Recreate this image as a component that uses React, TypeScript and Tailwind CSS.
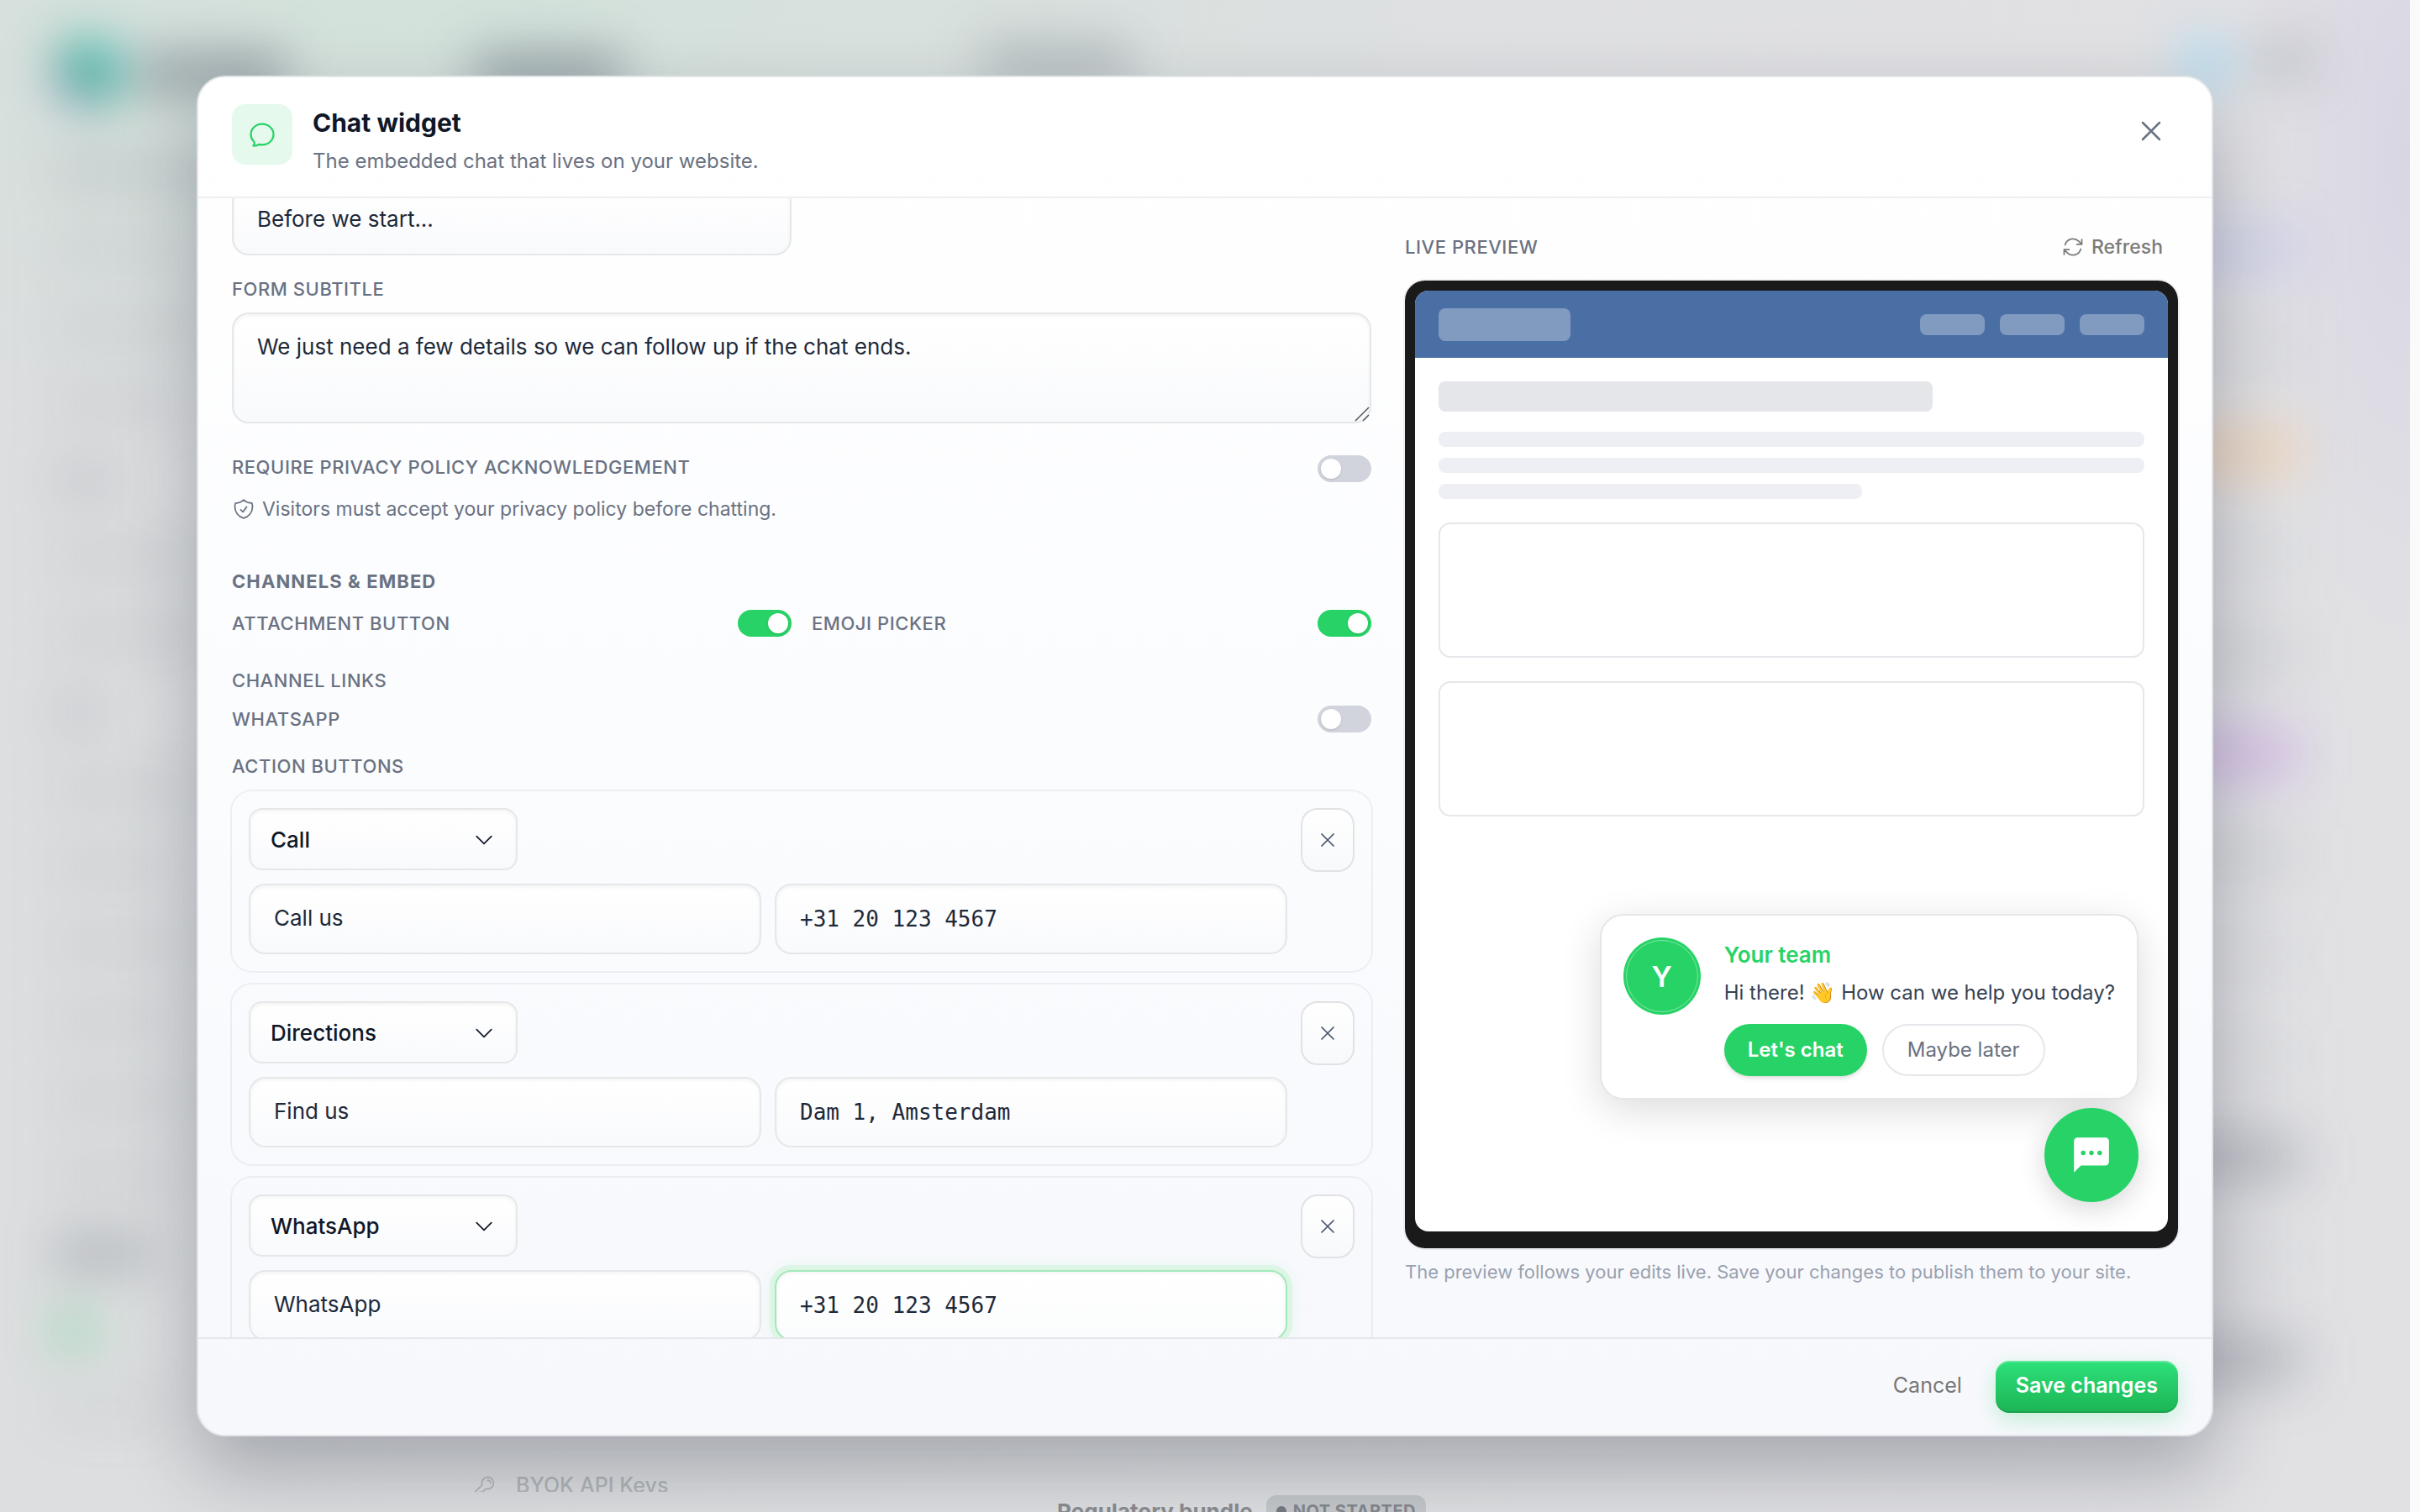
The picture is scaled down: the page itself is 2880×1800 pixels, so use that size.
import type { ReactNode } from "react";
import {
    HiOutlineArrowPath,
    HiOutlineChatBubbleOvalLeft,
    HiOutlineChevronDown,
    HiOutlineKey,
    HiOutlineShieldCheck,
    HiOutlineXMark,
} from "react-icons/hi2";

const actions = [
    { type: "Call", label: "Call us", value: "+31 20 123 4567", active: false },
    { type: "Directions", label: "Find us", value: "Dam 1, Amsterdam", active: false },
    { type: "WhatsApp", label: "WhatsApp", value: "+31 20 123 4567", active: true },
];

const sideRows = [
    "w-48 bg-gray-500/25", "w-40 bg-gray-500/15", "w-44 bg-gray-500/15", "w-36 bg-gray-500/15",
    "w-20 bg-gray-500/25", "w-40 bg-gray-500/15", "w-44 bg-gray-500/15", "w-16 bg-gray-500/25",
    "w-40 bg-gray-500/15", "w-36 bg-gray-500/15", "w-40 bg-gray-500/15", "w-36 bg-gray-500/15",
    "w-40 bg-gray-500/15", "w-36 bg-gray-500/15", "w-28 bg-gray-600/40", "w-12 bg-green-500/40",
    "w-32 bg-gray-500/10",
];

const rightRows = [
    "bg-indigo-400/15", "bg-gray-500/5", "bg-orange-300/30", "bg-gray-500/5",
    "bg-gray-500/10", "bg-purple-700/15", "bg-gray-500/10", "bg-gray-500/5",
    "bg-gray-500/5", "bg-gray-600/25", "bg-gray-500/5", "bg-gray-600/25",
];

const field =
    "block w-full border-2 border-[#e6e7e9] bg-linear-to-b from-white to-[#f9fafc] text-[26px] text-gray-800 shadow-[inset_0_2px_4px_rgba(0,0,0,0.05)] outline-none";

function Label({ htmlFor, children }: { htmlFor?: string; children: ReactNode }) {
    return (
        <label htmlFor={htmlFor} className="block text-[22px] leading-7 font-medium tracking-wide text-gray-500">
            {children}
        </label>
    );
}

function Toggle({ id, on }: { id: string; on?: boolean }) {
    return (
        <input
            id={id}
            type="checkbox"
            role="switch"
            defaultChecked={on}
            className="h-8 w-16 shrink-0 appearance-none rounded-full bg-[#d1d4dc] p-1 before:block before:size-6 before:rounded-full before:bg-white before:shadow-sm before:content-[''] checked:bg-[#27d366] checked:before:ml-8"
        />
    );
}

function ActionCard({ item, index }: { item: (typeof actions)[number]; index: number }) {
    return (
        <div className="flex items-start gap-4 rounded-3xl p-5 ring-2 ring-black/5">
            <div className="flex-1">
                <div className="relative w-80">
                    <select
                        aria-label={`Action ${index + 1} type`}
                        defaultValue={item.type}
                        className={`${field} h-[74px] appearance-none rounded-2xl px-6 font-medium text-gray-900`}
                    >
                        {actions.map((a) => (
                            <option key={a.type}>{a.type}</option>
                        ))}
                    </select>
                    <HiOutlineChevronDown className="pointer-events-none absolute top-6 right-[26px] size-7 text-gray-900" />
                </div>
                <div className="mt-4 grid grid-cols-2 gap-4">
                    <input
                        aria-label={`Action ${index + 1} label`}
                        defaultValue={item.label}
                        className={`${field} h-[84px] rounded-[20px] px-7 pb-1`}
                    />
                    <input
                        aria-label={`Action ${index + 1} value`}
                        defaultValue={item.value}
                        className={
                            item.active
                                ? "block h-[84px] w-full rounded-[20px] border-2 border-[#a0e9b9] bg-linear-to-b from-white to-[#fbfcfd] px-7 font-['DejaVu_Sans_Mono',monospace] text-[26px] text-gray-800 shadow-[0_0_0_6px_#dcf5e5,0_0_24px_rgba(37,211,102,0.12),inset_0_2px_4px_rgba(0,0,0,0.05)] outline-none"
                                : `${field} h-[84px] rounded-[20px] px-7 font-['DejaVu_Sans_Mono',monospace]`
                        }
                    />
                </div>
            </div>
            <button
                aria-label={`Remove ${item.type}`}
                className="flex h-[76px] w-16 items-center justify-center rounded-[20px] border-2 border-[#e1e2e4] bg-linear-to-b from-white to-[#f8f9fb] text-slate-600"
            >
                <HiOutlineXMark className="size-7" />
            </button>
        </div>
    );
}

function Preview() {
    return (
        <div className="relative h-[1152px] rounded-3xl bg-[#1a1a1a] px-3 pt-3 pb-5 ring-2 ring-black/5">
            <div className="relative h-full overflow-hidden rounded-2xl bg-white">
                <div className="flex h-20 items-center justify-between bg-[#4a6fa5] px-7">
                    <div className="h-[39px] w-[157px] rounded-lg bg-white/30" />
                    <div className="flex gap-[18px]">
                        <div className="h-[25px] w-[77px] rounded-lg bg-white/30" />
                        <div className="h-[25px] w-[77px] rounded-lg bg-white/30" />
                        <div className="h-[25px] w-[77px] rounded-lg bg-white/30" />
                    </div>
                </div>
                <div className="flex flex-col px-7 pt-7">
                    <div className="h-9 w-7/10 rounded-lg bg-[#e4e6ea]" />
                    <div className="mt-6 flex flex-col gap-[13px]">
                        <div className="h-[18px] w-full rounded-lg bg-[#eeeff4]" />
                        <div className="h-[18px] w-full rounded-lg bg-[#eeeff4]" />
                        <div className="h-[18px] w-3/5 rounded-lg bg-[#eeeff4]" />
                    </div>
                    <div className="mt-7 h-[161px] rounded-[14px] border-2 border-gray-200" />
                    <div className="mt-7 h-[161px] rounded-[14px] border-2 border-gray-200" />
                </div>

                {/* Chat teaser and launcher */}
                <div className="absolute right-[35px] bottom-[35px] flex flex-col items-end gap-[10px]">
                    <div className="flex gap-7 rounded-[28px] border-2 border-[#e6e6e8] bg-white p-[26px] shadow-[0_12px_48px_rgba(0,0,0,0.14)]">
                        <div className="flex size-[92px] shrink-0 items-center justify-center rounded-full bg-[#27d366] p-[3px]">
                            <div className="flex size-full items-center justify-center rounded-full border border-white/40 text-[34px] font-semibold text-white">
                                Y
                            </div>
                        </div>
                        <div>
                            <p className="text-[26px] leading-[42px] font-semibold text-[#27d366]">Your team</p>
                            <p className="mt-[3px] text-2xl leading-[42px] text-gray-700">
                                Hi there! 👋 How can we help you today?
                            </p>
                            <div className="mt-4 flex gap-[18px]">
                                <button className="h-[62px] rounded-full bg-[#27d366] px-7 text-2xl font-semibold text-white shadow-md">
                                    Let's chat
                                </button>
                                <button className="h-[62px] rounded-full border-2 border-gray-200 px-7 text-2xl text-gray-500">
                                    Maybe later
                                </button>
                            </div>
                        </div>
                    </div>
                    <button
                        aria-label="Open chat"
                        className="flex size-28 items-center justify-center rounded-full bg-[#27d366] shadow-[0_8px_32px_rgba(0,0,0,0.16)]"
                    >
                        <svg viewBox="0 0 24 24" className="size-[50px]">
                            <path fill="#fff" d="M20 2H4a2 2 0 0 0-2 2v18l4-4h14a2 2 0 0 0 2-2V4a2 2 0 0 0-2-2z" />
                            <circle cx="7.3" cy="10.8" r="1.3" fill="#27d366" />
                            <circle cx="12" cy="10.8" r="1.3" fill="#27d366" />
                            <circle cx="16.7" cy="10.8" r="1.3" fill="#27d366" />
                        </svg>
                    </button>
                </div>
            </div>
        </div>
    );
}

/* Settings page behind the dialog */
function Backdrop() {
    return (
        <div aria-hidden="true" className="absolute inset-0 overflow-hidden bg-linear-to-r from-[#dcdedf] to-[#e1e1e4]">
            <div className="absolute inset-0 bg-[radial-gradient(ellipse_1300px_500px_at_18%_0%,#d3e2db,transparent)]" />
            <div className="absolute inset-0 bg-[radial-gradient(ellipse_200px_600px_at_100%_10%,#d9d6e4,transparent)]" />
            <div className="absolute inset-0 flex justify-between px-16 pt-12 blur-[30px]">
                <div className="flex flex-col gap-[60px]">
                    <div className="flex items-center gap-5">
                        <div className="size-20 rounded-full bg-linear-to-bl from-sky-400/70 via-emerald-600/80 to-purple-500/70" />
                        <div className="h-12 w-44 bg-gray-600/50" />
                        <div className="ml-[204px] h-12 w-44 bg-gray-600/50" />
                        <div className="mb-6 ml-[410px] h-12 w-44 bg-gray-600/30" />
                    </div>
                    {sideRows.map((row, i) => (
                        <div key={i} className={`h-8 shrink-0 ${row}`} />
                    ))}
                </div>
                <div className="flex w-80 flex-col gap-14">
                    <div className="mb-[106px] flex gap-6 pl-28">
                        <div className="size-14 rounded-full bg-sky-300/60" />
                        <div className="h-12 w-20 bg-gray-500/25" />
                    </div>
                    {rightRows.map((row, i) => (
                        <div key={i} className={`h-16 w-64 shrink-0 ${row}`} />
                    ))}
                </div>
            </div>
            <div className="absolute inset-0 flex flex-col justify-end">
                <div className="flex items-end">
                    <div className="flex h-12 w-[1122px] shrink-0 items-start pl-[562px]">
                        <div className="flex h-6 items-start gap-6 overflow-hidden text-[25px] font-medium text-[#b3b7ba]">
                            <HiOutlineKey className="mt-1 size-7" />
                            <span className="leading-8">BYOK API Keys</span>
                        </div>
                    </div>
                    <div className="flex h-5 items-start gap-4 pl-[136px]">
                        <span className="mt-1 text-[26px] leading-8 font-bold text-[#8a8d92]">Regulatory bundle</span>
                        <span className="flex items-center gap-2 rounded-t-xl bg-[#c5c8cb] px-3 pt-[7px] text-xl leading-6 font-bold tracking-wide text-[#84888f]">
                            <span className="size-3 rounded-full bg-[#777b82]" />
                            NOT STARTED
                        </span>
                    </div>
                </div>
            </div>
        </div>
    );
}

function App() {
    return (
        <div className="flex h-screen bg-[#fafafa] font-[Inter,sans-serif]">
            <div className="relative flex-1">
                <Backdrop />
                <div className="relative h-full px-[234px] py-[90px]">
                    <div
                        role="dialog"
                        aria-labelledby="dialog-title"
                        className="flex h-full flex-col overflow-hidden rounded-[34px] border-2 border-[#e3e4e7] bg-linear-to-b from-white via-[#fbfcfe] to-[#f7f8fc] shadow-[0_40px_90px_rgba(15,23,42,0.28)]"
                    >
                        {/* Header */}
                        <header className="flex h-36 shrink-0 items-start gap-6 border-b-2 border-[#eeeff0] px-10 pt-8">
                            <div className="flex size-[72px] items-center justify-center rounded-2xl bg-[#e6f9ed]">
                                <HiOutlineChatBubbleOvalLeft className="size-9 text-[#27d366]" />
                            </div>
                            <div className="flex-1">
                                <h2 id="dialog-title" className="mt-1 text-3xl leading-9 font-bold text-gray-900">
                                    Chat widget
                                </h2>
                                <p className="mt-[10px] text-2xl leading-9 text-gray-500">
                                    The embedded chat that lives on your website.
                                </p>
                            </div>
                            <button aria-label="Close" className="mt-3 mr-3 text-gray-500">
                                <HiOutlineXMark className="size-10" />
                            </button>
                        </header>

                        {/* Body */}
                        <div className="grid min-h-0 flex-1 grid-cols-[minmax(0,1fr)_920px] gap-10 overflow-hidden px-10">
                            <div>
                                <div className="-mt-4 grid grid-cols-2 gap-6">
                                    <input
                                        aria-label="Form title"
                                        defaultValue="Before we start..."
                                        className={`${field} h-[84px] rounded-[20px] px-7 pb-1`}
                                    />
                                </div>
                                <div className="mt-[26px]">
                                    <Label htmlFor="subtitle">FORM SUBTITLE</Label>
                                    <div className="relative mt-[14px]">
                                        <textarea
                                            id="subtitle"
                                            defaultValue="We just need a few details so we can follow up if the chat ends."
                                            className={`${field} h-[132px] resize-none rounded-[20px] px-7 py-5 leading-[38px]`}
                                        />
                                        <svg viewBox="0 0 18 18" className="pointer-events-none absolute right-0.5 bottom-0.5 size-[18px]">
                                            <path d="M1 17L17 1M10 17L17 10" stroke="#555" strokeWidth="1.5" />
                                        </svg>
                                    </div>
                                </div>
                                <div className="mt-[38px] flex items-start justify-between">
                                    <Label htmlFor="privacy">REQUIRE PRIVACY POLICY ACKNOWLEDGEMENT</Label>
                                    <Toggle id="privacy" />
                                </div>
                                <p className="mt-4 flex items-center gap-2 text-[23px] leading-8 text-gray-500">
                                    <HiOutlineShieldCheck className="size-7" />
                                    Visitors must accept your privacy policy before chatting.
                                </p>

                                <h3 className="mt-[54px] text-[22px] leading-8 font-bold tracking-wider text-gray-500">
                                    CHANNELS &amp; EMBED
                                </h3>
                                <div className="mt-[18px] grid grid-cols-2 gap-6">
                                    <div className="flex items-center justify-between">
                                        <Label htmlFor="attachment">ATTACHMENT BUTTON</Label>
                                        <Toggle id="attachment" on />
                                    </div>
                                    <div className="flex items-center justify-between">
                                        <Label htmlFor="emoji">EMOJI PICKER</Label>
                                        <Toggle id="emoji" on />
                                    </div>
                                </div>
                                <p className="mt-9 text-[22px] leading-8 font-medium tracking-wide text-gray-500">CHANNEL LINKS</p>
                                <div className="mt-[14px] flex items-center justify-between">
                                    <Label htmlFor="whatsapp">WHATSAPP</Label>
                                    <Toggle id="whatsapp" />
                                </div>
                                <p className="mt-6 text-[22px] leading-8 font-medium tracking-wide text-gray-500">ACTION BUTTONS</p>
                                <div className="mt-[14px] flex flex-col gap-4">
                                    {actions.map((item, i) => (
                                        <ActionCard key={i} item={item} index={i} />
                                    ))}
                                </div>
                            </div>

                            <div className="pt-7">
                                <div className="flex h-[60px] items-center justify-between">
                                    <p className="text-[22px] font-medium tracking-wide text-gray-500">LIVE PREVIEW</p>
                                    <button className="flex h-full items-center gap-2 px-[18px] text-[23px] font-medium text-[#7b7b7b]">
                                        <HiOutlineArrowPath className="size-7" />
                                        Refresh
                                    </button>
                                </div>
                                <div className="mt-[10px]">
                                    <Preview />
                                </div>
                                <p className="mt-3 text-[22px] leading-8 text-gray-400">
                                    The preview follows your edits live. Save your changes to publish them to your site.
                                </p>
                            </div>
                        </div>

                        {/* Footer */}
                        <footer className="flex shrink-0 items-center justify-end border-t-2 border-[#e6e7ea] px-10 py-[26px]">
                            <button className="h-[62px] px-10 pb-0.5 text-[25px] text-[#777]">Cancel</button>
                            <button className="h-[62px] rounded-2xl bg-linear-to-b from-[#2de27a] to-[#1cb454] px-6 pb-0.5 text-[25px] font-semibold text-white shadow-[0_8px_24px_rgba(37,211,102,0.25),inset_0_2px_0_rgba(255,255,255,0.25),inset_0_-2px_0_rgba(0,0,0,0.1)]">
                                Save changes
                            </button>
                        </footer>
                    </div>
                </div>
            </div>
            {/* Scrollbar gutter */}
            <div className="w-3" />
        </div>
    );
}

export default App;
